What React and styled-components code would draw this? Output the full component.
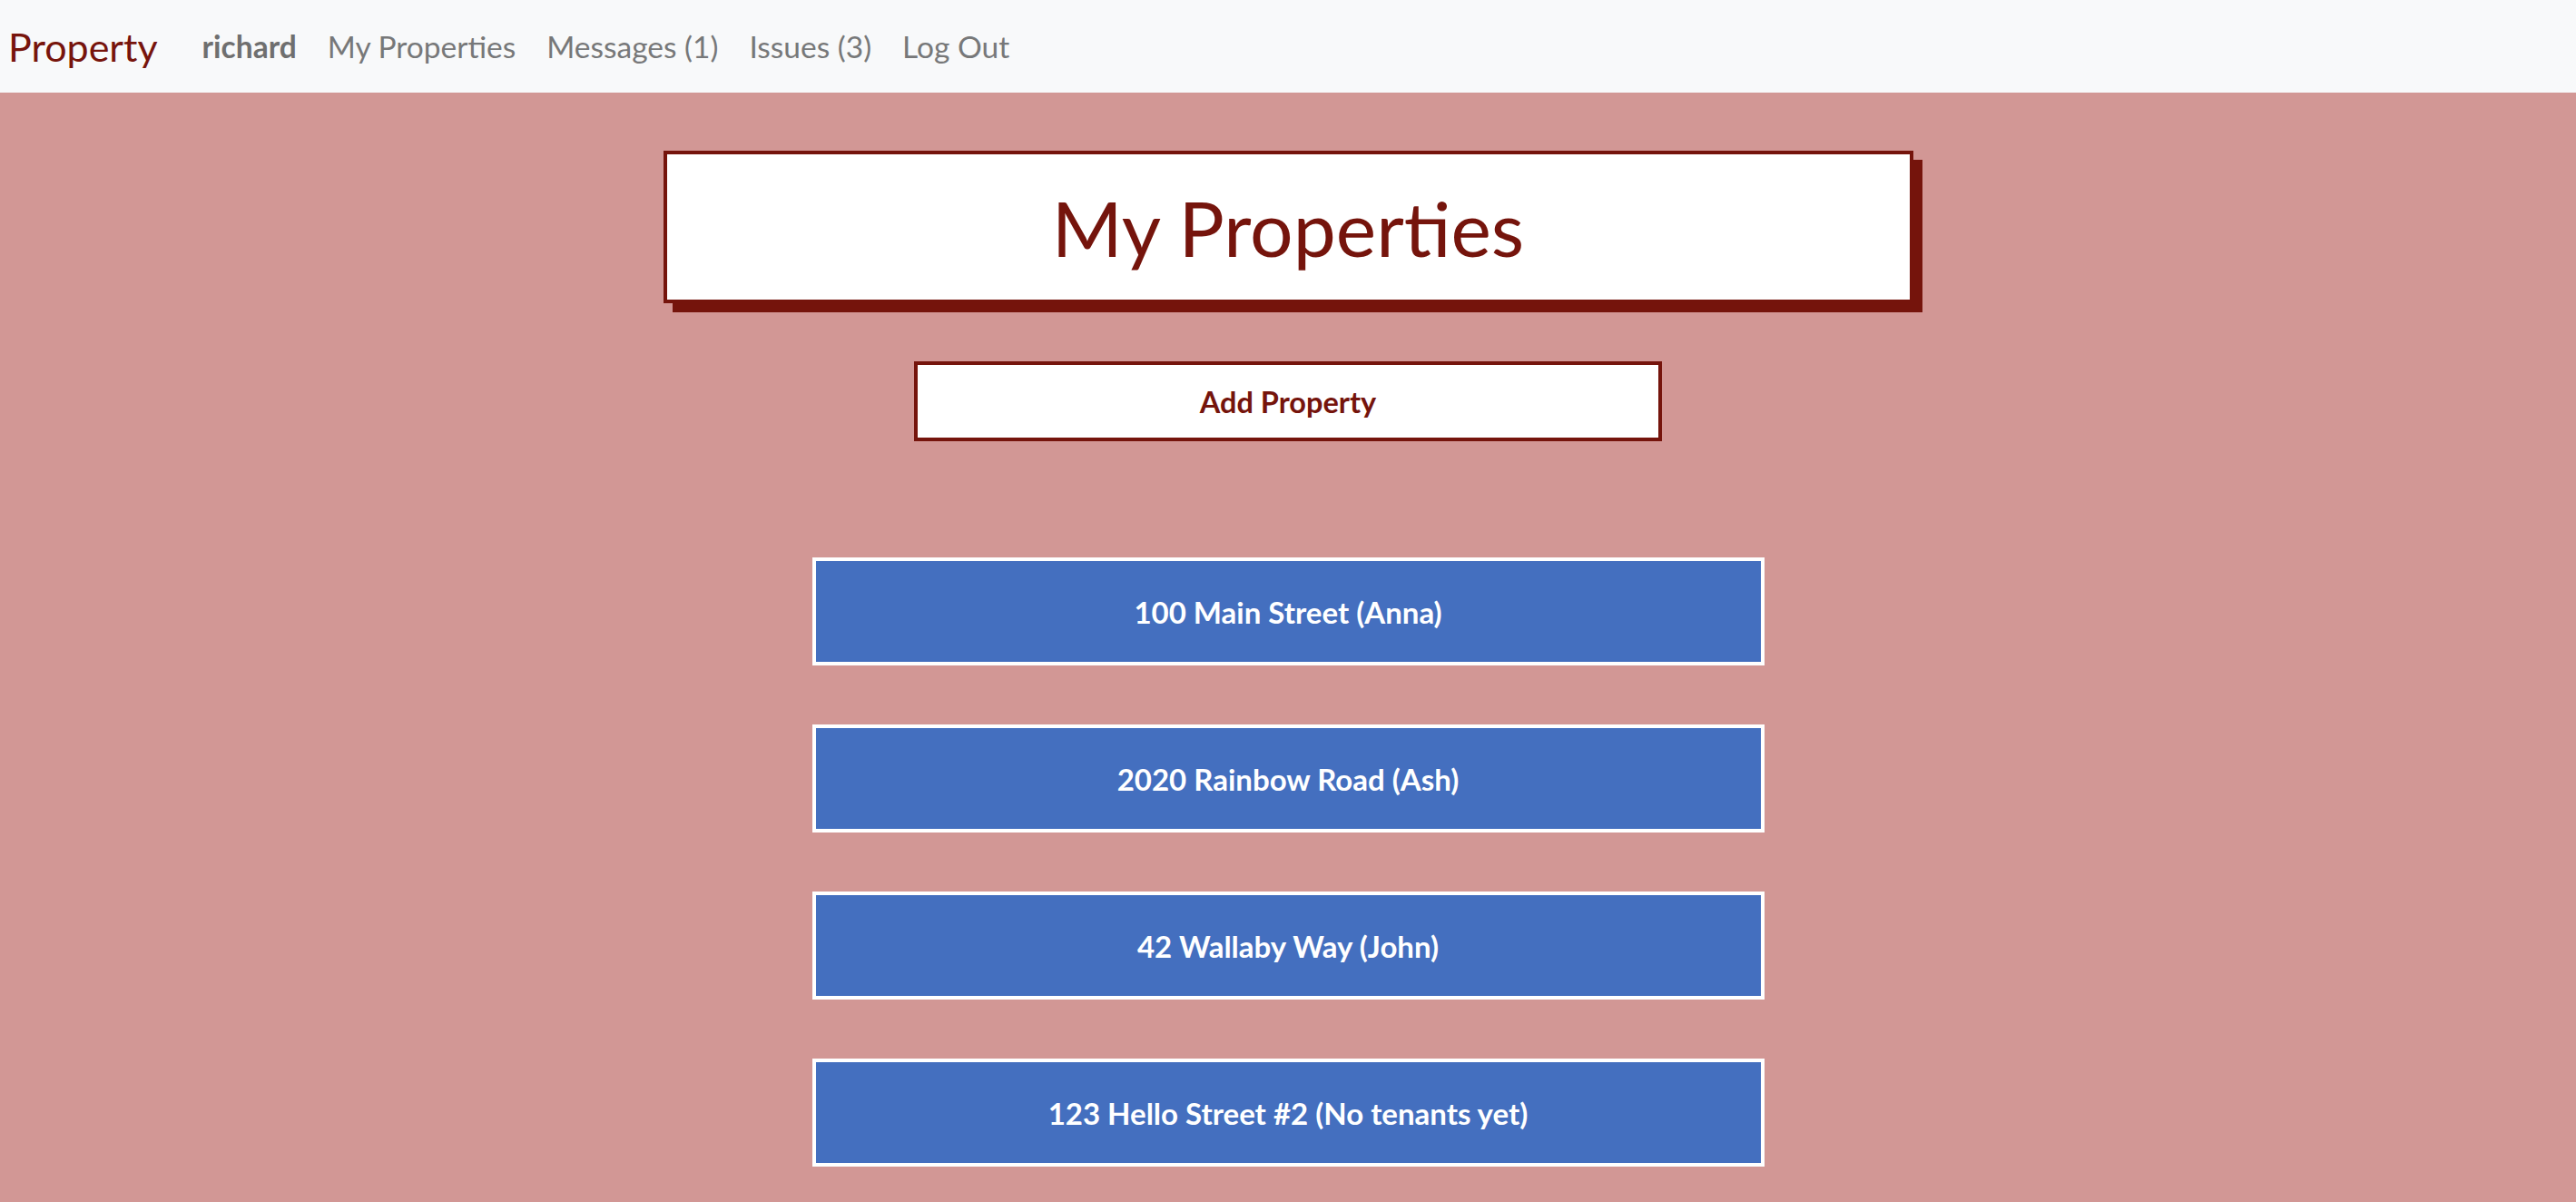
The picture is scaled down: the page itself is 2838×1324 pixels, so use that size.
import React from 'react'
import styled, { createGlobalStyle } from 'styled-components'

const GlobalStyle = createGlobalStyle`
  html, body {
    margin: 0;
    padding: 0;
    background-color: #d29795;
    font-family: Lato, "Liberation Sans", sans-serif;
  }
  * {
    box-sizing: border-box;
  }
`

const Nav = styled.nav`
  display: flex;
  align-items: center;
  height: 102px;
  padding: 0 9px;
  background-color: #f8f9fa;
`

const Brand = styled.a`
  color: #77140c;
  font-size: 43px;
  margin-right: 32px;
  text-decoration: none;
  cursor: pointer;
`

const NavLink = styled.a`
  color: ${(p) => (p.$user ? '#6f6f6f' : '#777879')};
  font-weight: ${(p) => (p.$user ? 700 : 400)};
  font-size: 33.5px;
  padding: 0 17px;
  text-decoration: none;
  cursor: pointer;
`

const Main = styled.main`
  display: flex;
  flex-direction: column;
  align-items: center;
  padding: 64px 0 40px;
`

const TitleBox = styled.div`
  width: 1377px;
  height: 168px;
  display: flex;
  align-items: center;
  justify-content: center;
  background-color: #fff;
  border: 4px solid #75140c;
  box-shadow: 10px 10px 0 #75140c;
`

const Title = styled.h1`
  margin: 0;
  color: #75140c;
  font-size: 84px;
  font-weight: 400;
`

const AddButton = styled.button`
  margin-top: 64px;
  width: 824px;
  height: 88px;
  background-color: #fff;
  border: 4px solid #75140c;
  color: #75140c;
  font-family: inherit;
  font-size: 32.5px;
  font-weight: 700;
  cursor: pointer;
`

const List = styled.div`
  margin-top: 128px;
  display: flex;
  flex-direction: column;
  gap: 65px;
`

const Card = styled.button`
  width: 1049px;
  height: 119px;
  background-color: #446fbf;
  border: 4px solid #fff;
  color: #fff;
  font-family: inherit;
  font-size: 33px;
  font-weight: 700;
  white-space: pre;
  cursor: pointer;
`

const properties = [
  { address: '100 Main Street', tenant: 'Anna' },
  { address: '2020 Rainbow Road', tenant: 'Ash' },
  { address: '42 Wallaby Way', tenant: 'John' },
  { address: '123 Hello Street #2', tenant: null },
]

const App = () => {
  return (
    <>
      <GlobalStyle />
      <Nav>
        <Brand>Property</Brand>
        <NavLink $user>richard</NavLink>
        <NavLink>My Properties</NavLink>
        <NavLink>Messages (1)</NavLink>
        <NavLink>Issues (3)</NavLink>
        <NavLink>Log Out</NavLink>
      </Nav>
      <Main>
        <TitleBox>
          <Title>My Properties</Title>
        </TitleBox>
        <AddButton>Add Property</AddButton>
        <List>
          {properties.map((p) => (
            <Card key={p.address}>
              {p.address} ({p.tenant ? p.tenant : 'No tenants yet'})
            </Card>
          ))}
        </List>
      </Main>
    </>
  )
}

export default App
